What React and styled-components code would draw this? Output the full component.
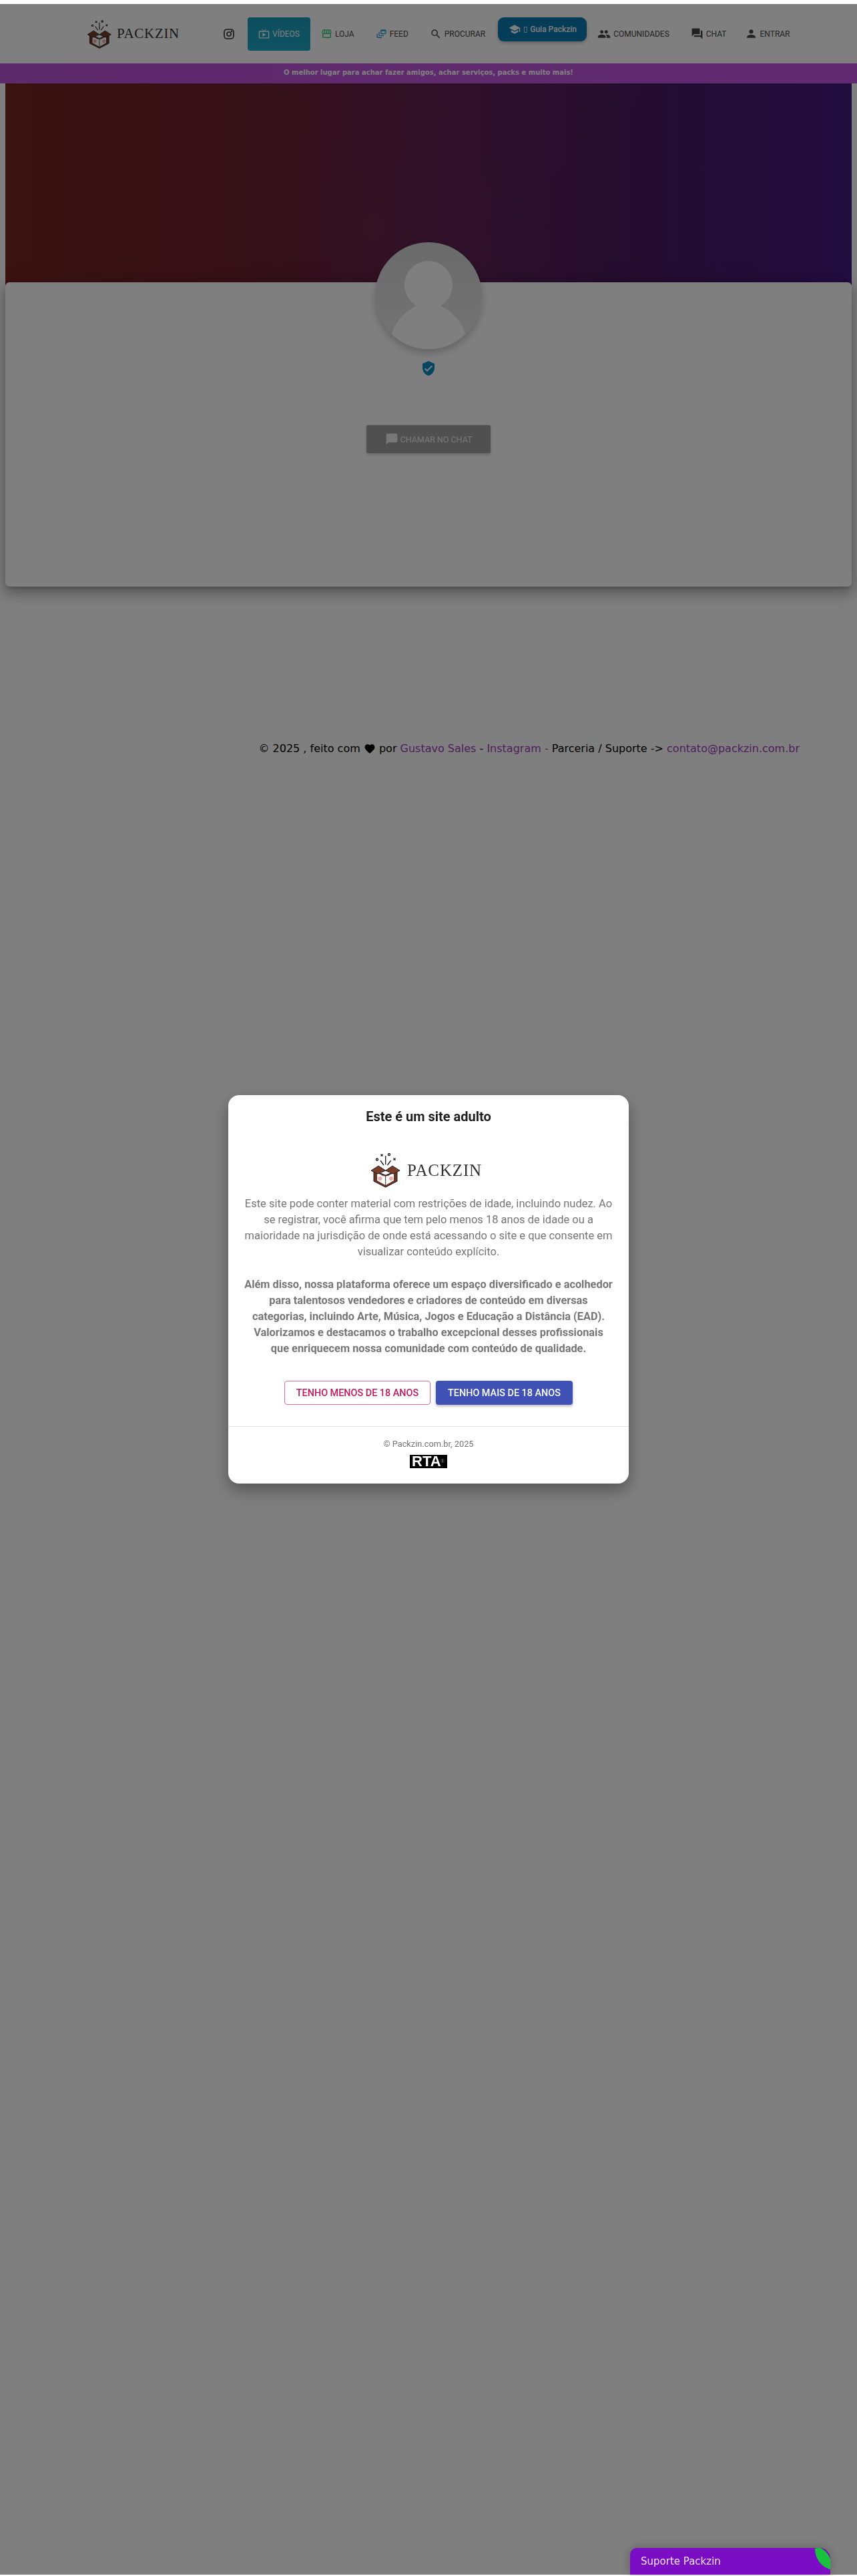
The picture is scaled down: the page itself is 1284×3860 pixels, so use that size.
import React from "react";
import styled, { createGlobalStyle } from "styled-components";
import {
  MdLiveTv, MdOutlineStorefront, MdOutlineDynamicFeed, MdSearch, MdSchool,
  MdPeople, MdForum, MdPerson, MdChatBubble, MdVerifiedUser, MdFavorite,
} from "react-icons/md";

const Global = createGlobalStyle`
  html, body { margin: 0; padding: 0; background: #fff; }
  body { padding-top: 6px; min-height: 3854px; font-family: "DejaVu Sans", sans-serif; }
  * { box-sizing: border-box; }
`;

const Header = styled.header`
  height: 89px;
  background: #fff;
  display: flex;
  align-items: center;
  padding-left: 127px;
  font-family: Roboto, sans-serif;
`;
const LogoRow = styled.div`
  display: flex;
  align-items: center;
  gap: ${(p) => p.$gap}px;
`;
const LogoWord = styled.span`
  font-family: "Liberation Serif", serif;
  font-size: ${(p) => p.$size}px;
  letter-spacing: ${(p) => p.$track}px;
  line-height: 1;
  color: #333;
`;
const InstaLink = styled.a`
  display: flex;
  margin-left: 66px;
  margin-right: 20px;
  color: #333;
`;
const NavItem = styled.a`
  display: flex;
  align-items: center;
  gap: 4px;
  height: 50px;
  padding: 0 16px;
  margin-left: ${(p) => p.$pull || 0}px;
  border-radius: 4px;
  font-size: 12px;
  font-weight: 400;
  color: ${(p) => (p.$active ? "#fff" : "#444")};
  background: ${(p) => (p.$active ? "linear-gradient(#1a9cba, #1ea8c6)" : "transparent")};
  white-space: nowrap;
  svg { flex: none; color: ${(p) => p.$icon || "inherit"}; }
`;
const GuideButton = styled.a`
  display: flex;
  align-items: center;
  width: 133px;
  height: 36px;
  margin: 0 0 13px 3px;
  padding-left: 16px;
  border-radius: 9px;
  background: #0a78ae;
  box-shadow: 0 2px 5px rgba(0, 0, 0, 0.26);
  color: #fff;
  font-size: 12px;
  font-weight: 500;
  white-space: nowrap;
`;
const MissingGlyph = styled.span`
  display: inline-block;
  width: 5px;
  height: 9px;
  margin: 0 4px 0 5px;
  border: 1px solid rgba(255, 255, 255, 0.7);
`;
const Tagline = styled.div`
  height: 30px;
  display: flex;
  justify-content: center;
  padding-top: 6px;
  background: linear-gradient(90deg, #bb55d8, #c455e2);
  color: #fff;
  font-size: 10px;
  font-weight: 700;
  line-height: 16px;
`;
const Main = styled.main`
  padding: 0 8px;
`;
const Banner = styled.div`
  height: 305px;
  background:
    linear-gradient(125deg, transparent 46%, rgba(255, 255, 255, 0.008) 46%, transparent 72%),
    linear-gradient(55deg, transparent 40%, rgba(255, 255, 255, 0.008) 40%, transparent 66%),
    linear-gradient(90deg, #752420 0%, #6c2030 30%, #5e2050 52%, #48195f 75%, #441a80 100%);
`;
const Card = styled.section`
  position: relative;
  height: 456px;
  margin-top: -7px;
  display: flex;
  flex-direction: column;
  align-items: center;
  background: #fff;
  border-radius: 6px;
  box-shadow: 0 8px 17px 2px rgba(0, 0, 0, 0.2), 0 6px 30px 5px rgba(0, 0, 0, 0.14), 0 5px 5px -3px rgba(0, 0, 0, 0.2);
`;
const Avatar = styled.svg`
  flex: none;
  width: 160px;
  height: 160px;
  margin-top: -60px;
  border-radius: 50%;
  box-shadow: 0 6px 12px rgba(0, 0, 0, 0.22);
`;
const Badge = styled.div`
  display: flex;
  height: 24px;
  margin-top: 17px;
  color: #0b8ac4;
`;
const ChatButton = styled.button`
  display: flex;
  align-items: center;
  justify-content: center;
  gap: 3px;
  width: 186px;
  height: 42px;
  margin-top: 73px;
  border: 0;
  border-radius: 3px;
  background: #a0a0a0;
  box-shadow: 0 2px 5px rgba(0, 0, 0, 0.22);
  color: #eee;
  font-family: Roboto, sans-serif;
  font-size: 12.5px;
  font-weight: 400;
`;
const Footer = styled.footer`
  display: flex;
  align-items: center;
  justify-content: flex-end;
  margin-top: 231px;
  padding-right: 78px;
  font-size: 16px;
  line-height: 24px;
  color: #000;
  white-space: pre;
`;
const FooterLink = styled.a`
  color: #9c3dba;
`;
const Overlay = styled.div`
  position: fixed;
  left: 0;
  right: 0;
  top: 6px;
  bottom: 2px;
  display: flex;
  align-items: center;
  justify-content: center;
  background: rgba(0, 0, 0, 0.5);
`;
const Modal = styled.div`
  width: 600px;
  height: 582px;
  padding-top: 20px;
  display: flex;
  flex-direction: column;
  align-items: center;
  background: #fff;
  border-radius: 16px;
  box-shadow: 0 10px 25px rgba(0, 0, 0, 0.35);
  font-family: Roboto, sans-serif;
`;
const ModalTitle = styled.h2`
  margin: 0;
  font-size: 20px;
  line-height: 24px;
  font-weight: 700;
  color: #212121;
`;
const ModalLogo = styled.div`
  margin: 40px 11px 11px 0;
`;
const Copy = styled.p`
  width: ${(p) => (p.$strong ? 553 : 554)}px;
  margin: 0 0 25px;
  text-align: center;
  font-size: ${(p) => (p.$strong ? 16.35 : 16.5)}px;
  line-height: 24px;
  font-weight: ${(p) => (p.$strong ? 700 : 400)};
  color: #757575;
`;
const Actions = styled.div`
  display: flex;
  gap: 8px;
  margin-top: 11px;
`;
const AgeButton = styled.button`
  height: 36px;
  width: ${(p) => p.$w}px;
  padding: 0;
  border-radius: 4px;
  border: ${(p) => (p.$primary ? "0" : "1px solid #e26a90")};
  background: ${(p) => (p.$primary ? "#3f51b5" : "#fff")};
  color: ${(p) => (p.$primary ? "#fff" : "#c2185b")};
  box-shadow: ${(p) => (p.$primary ? "0 2px 4px rgba(0,0,0,.3)" : "none")};
  font-family: Roboto, sans-serif;
  font-size: 14.4px;
  font-weight: 500;
`;
const ModalFoot = styled.div`
  align-self: stretch;
  margin-top: 32px;
  padding-top: 16px;
  border-top: 1px solid #e0e0e0;
  display: flex;
  flex-direction: column;
  align-items: center;
`;
const Copyright = styled.div`
  font-size: 12.8px;
  line-height: 20px;
  font-weight: 400;
  color: #757575;
`;
const Rta = styled.div`
  width: 56px;
  height: 20px;
  margin-top: 6px;
  padding-left: 3px;
  display: flex;
  background: #000;
  color: #fff;
  font-family: "Liberation Sans", sans-serif;
  font-size: 22px;
  font-weight: 700;
  line-height: 20px;
`;
const RtaMark = styled.span`
  margin-top: 6px;
  font-size: 7px;
  line-height: 8px;
  font-weight: 400;
  color: #999;
`;
const Support = styled.div`
  position: absolute;
  right: 40px;
  bottom: 0;
  width: 300px;
  height: 40px;
  display: flex;
  align-items: center;
  padding-left: 16px;
  background: #7b0dc4;
  border-radius: 10px 15px 0 0 / 10px 17px 0 0;
  box-shadow: 0 0 16px rgba(0, 0, 0, 0.25);
  color: #f3e6fb;
  font-size: 15px;
`;
const Leaf = styled.svg`
  position: absolute;
  top: 0;
  right: 0;
`;

const BoxLogo = ({ size }) => (
  <svg width={size} height={size} viewBox="0 0 56 56" aria-hidden="true">
    <g stroke="#222" strokeWidth="1.4" fill="none">
      <path d="M26.7 7v13M19 14l5 7M34.500 14l-5 7" />
      <circle cx="14" cy="12.500" r="1.500" />
      <circle cx="32" cy="5" r="1.500" />
      <path d="M19.500 4.500l3 3M22.500 4.500l-3 3M38.500 10.500l3 3M41.500 10.500l-3 3" />
    </g>
    <path d="M9 29 26.700 36 44 29v16L26.700 54 9 45z" fill="#6b3422" stroke="#222" strokeWidth="1" />
    <path d="M14 33 26.700 38 39 33v11L26.700 51 14 44z" fill="#fff" />
    <circle cx="18.500" cy="41" r="3" fill="#f1a7a7" />
    <circle cx="35" cy="41" r="3" fill="#f1a7a7" />
    <path d="M5 29 16 22 26.700 29 15 34zM48 29 37 22 26.700 29 38 34z" fill="#7a3d27" stroke="#222" strokeWidth="1" />
    <path d="M26.700 38v13M18 33l5 4M35 33l-5 4" stroke="#333" strokeWidth="1" />
  </svg>
);

const InstaIcon = () => (
  <svg width="16" height="16" viewBox="0 0 16 16" fill="none" stroke="currentColor" strokeWidth="1.600">
    <rect x="1" y="1" width="14" height="14" rx="4" />
    <circle cx="8" cy="8" r="3" />
    <circle cx="12" cy="4" r="0.500" fill="currentColor" />
  </svg>
);

export default function App() {
  return (
    <>
      <Global />
      <Header>
        <LogoRow $gap={2}>
          <BoxLogo size={46} />
          <LogoWord $size={21} $track={0.7}>PACKZIN</LogoWord>
        </LogoRow>
        <InstaLink><InstaIcon /></InstaLink>
        <NavItem $active><MdLiveTv size={17} />VÍDEOS</NavItem>
        <NavItem $icon="#35c880"><MdOutlineStorefront size={17} />LOJA</NavItem>
        <NavItem $icon="#3aa0d8"><MdOutlineDynamicFeed size={17} />FEED</NavItem>
        <NavItem><MdSearch size={18} />PROCURAR</NavItem>
        <GuideButton><MdSchool size={18} /><MissingGlyph />Guia Packzin</GuideButton>
        <NavItem><MdPeople size={20} />COMUNIDADES</NavItem>
        <NavItem><MdForum size={19} />CHAT</NavItem>
        <NavItem $pull={-5}><MdPerson size={19} />ENTRAR</NavItem>
      </Header>
      <Tagline>O melhor lugar para achar fazer amigos, achar serviços, packs e muito mais!</Tagline>
      <Main>
        <Banner />
        <Card>
          <Avatar viewBox="0 0 160 160" aria-hidden="true">
            <defs>
              <linearGradient id="disc" x1="0" y1="0" x2="0" y2="1">
                <stop offset="0" stopColor="#d6d6d6" />
                <stop offset="1" stopColor="#e8e8e8" />
              </linearGradient>
            </defs>
            <rect width="160" height="160" fill="url(#disc)" />
            <circle cx="80" cy="64" r="36" fill="#fff" />
            <ellipse cx="80" cy="170" rx="61" ry="78" fill="#fff" />
          </Avatar>
          <Badge><MdVerifiedUser size={24} /></Badge>
          <ChatButton><MdChatBubble size={20} />CHAMAR NO CHAT</ChatButton>
        </Card>
        <Footer>
          © 2025 , feito com <MdFavorite size={18} /> por <FooterLink>Gustavo Sales</FooterLink> - <FooterLink>Instagram -</FooterLink> Parceria / Suporte {"->"} <FooterLink>contato@packzin.com.br</FooterLink>
        </Footer>
      </Main>
      <Overlay>
        <Modal>
          <ModalTitle>Este é um site adulto</ModalTitle>
          <ModalLogo>
            <LogoRow $gap={3}>
              <BoxLogo size={56} />
              <LogoWord $size={25} $track={0.85}>PACKZIN</LogoWord>
            </LogoRow>
          </ModalLogo>
          <Copy>Este site pode conter material com restrições de idade, incluindo nudez. Ao se registrar, você afirma que tem pelo menos 18 anos de idade ou a maioridade na jurisdição de onde está acessando o site e que consente em visualizar conteúdo explícito.</Copy>
          <Copy $strong>Além disso, nossa plataforma oferece um espaço diversificado e acolhedor para talentosos vendedores e criadores de conteúdo em diversas categorias, incluindo Arte, Música, Jogos e Educação a Distância (EAD). Valorizamos e destacamos o trabalho excepcional desses profissionais que enriquecem nossa comunidade com conteúdo de qualidade.</Copy>
          <Actions>
            <AgeButton $w={219}>TENHO MENOS DE 18 ANOS</AgeButton>
            <AgeButton $w={205} $primary>TENHO MAIS DE 18 ANOS</AgeButton>
          </Actions>
          <ModalFoot>
            <Copyright>© Packzin.com.br, 2025</Copyright>
            <Rta>RTA<RtaMark>®</RtaMark></Rta>
          </ModalFoot>
        </Modal>
        <Support>
          Suporte Packzin
          <Leaf width="23" height="32" viewBox="0 0 23 32" aria-hidden="true">
            <path d="M0 1C0 14 8 28 23 32V17C21 10 15 3 8 0H3Z" fill="#19c23c" />
          </Leaf>
        </Support>
      </Overlay>
    </>
  );
}
